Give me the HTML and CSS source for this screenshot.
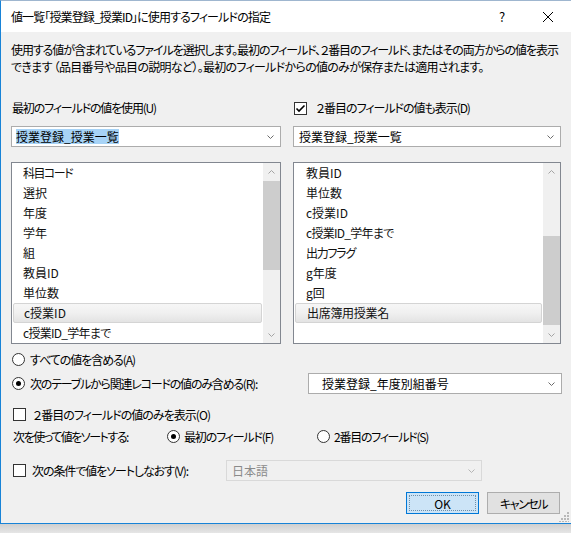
FILE: index.html
```html
<!DOCTYPE html>
<html lang="ja">
<head>
<meta charset="utf-8">
<link rel="stylesheet" href="styles.css">
</head>
<body>
<div class="window">
  <div class="titlebar">
    <span class="title">値一覧「授業登録_授業ID」に使用するフィールドの指定</span>
    <span class="help">?</span>
    <span class="close"><svg width="10" height="10" viewBox="0 0 10 10"><path d="M0 0 L10 10 M10 0 L0 10" stroke="#000" stroke-width="1" fill="none"/></svg></span>
  </div>
  <div class="content">
    <div class="desc">
      <div class="desc1">使用する値が含まれているファイルを選択します。最初のフィールド、２番目のフィールド、またはその両方からの値を表示</div>
      <div class="desc2">できます （品目番号や品目の説明など）。最初のフィールドからの値のみが保存または適用されます。</div>
    </div>
    <div class="columns">
      <div class="col">
        <div class="label label-u">最初のフィールドの値を使用(U)</div>
        <div class="combo">
          <span class="sel">授業登録_授業一覧</span>
          <svg class="chev" width="7" height="4" viewBox="0 0 7 4"><path d="M0.5 0.5 L3.5 3.5 L6.5 0.5" stroke="#6b6b6b" fill="none"/></svg>
        </div>
        <div class="list">
          <div class="items">
            <div class="item kana">科目コード</div>
            <div class="item">選択</div>
            <div class="item">年度</div>
            <div class="item">学年</div>
            <div class="item">組</div>
            <div class="item">教員ID</div>
            <div class="item">単位数</div>
            <div class="item selected">c授業ID</div>
            <div class="item kana2">c授業ID_学年まで</div>
          </div>
          <div class="scrollbar">
            <div class="arrow"><svg width="7" height="4" viewBox="0 0 7 4"><path d="M0.5 3.5 L3.5 0.5 L6.5 3.5" stroke="#a3a3a3" fill="none"/></svg></div>
            <div class="track">
              <div class="thumb thumb-left"></div>
            </div>
            <div class="arrow"><svg width="7" height="4" viewBox="0 0 7 4"><path d="M0.5 0.5 L3.5 3.5 L6.5 0.5" stroke="#a3a3a3" fill="none"/></svg></div>
          </div>
        </div>
      </div>
      <div class="col">
        <div class="label check-label"><span class="checkbox checked"><svg width="11" height="11" viewBox="0 0 11 11"><path d="M1.5 5.5 L4 8 L9.5 2.5" stroke="#000" stroke-width="1.6" fill="none"/></svg></span><span class="label-d">２番目のフィールドの値も表示(D)</span></div>
        <div class="combo">
          <span class="plain">授業登録_授業一覧</span>
          <svg class="chev" width="7" height="4" viewBox="0 0 7 4"><path d="M0.5 0.5 L3.5 3.5 L6.5 0.5" stroke="#6b6b6b" fill="none"/></svg>
        </div>
        <div class="list list-right">
          <div class="items">
            <div class="item">教員ID</div>
            <div class="item">単位数</div>
            <div class="item">c授業ID</div>
            <div class="item kana2">c授業ID_学年まで</div>
            <div class="item kana3">出力フラグ</div>
            <div class="item">g年度</div>
            <div class="item">g回</div>
            <div class="item selected kana4">出席簿用授業名</div>
          </div>
          <div class="scrollbar">
            <div class="arrow"><svg width="7" height="4" viewBox="0 0 7 4"><path d="M0.5 3.5 L3.5 0.5 L6.5 3.5" stroke="#a3a3a3" fill="none"/></svg></div>
            <div class="track">
              <div class="thumb thumb-right"></div>
            </div>
            <div class="arrow"><svg width="7" height="4" viewBox="0 0 7 4"><path d="M0.5 0.5 L3.5 3.5 L6.5 0.5" stroke="#a3a3a3" fill="none"/></svg></div>
          </div>
        </div>
      </div>
    </div>

    <div class="row row-a"><span class="radio"></span><span class="t-a">すべての値を含める(A)</span></div>
    <div class="row row-r">
      <span class="radio on"></span><span class="t-r">次のテーブルから関連レコードの値のみ含める(R):</span>
      <div class="combo combo-rel">
        <span class="plain">授業登録_年度別組番号</span>
        <svg class="chev" width="7" height="4" viewBox="0 0 7 4"><path d="M0.5 0.5 L3.5 3.5 L6.5 0.5" stroke="#6b6b6b" fill="none"/></svg>
      </div>
    </div>
    <div class="row row-o"><span class="checkbox"></span><span class="t-o">２番目のフィールドの値のみを表示(O)</span></div>
    <div class="row row-sort">
      <span class="sort-label">次を使って値をソートする:</span>
      <span class="opt"><span class="radio on"></span><span class="t-f">最初のフィールド(F)</span></span>
      <span class="opt"><span class="radio"></span><span class="t-s">2番目のフィールド(S)</span></span>
    </div>
    <div class="row row-v">
      <span class="checkbox"></span><span class="v-label">次の条件で値をソートしなおす(V):</span>
      <div class="combo combo-lang">
        <span class="plain">日本語</span>
        <svg class="chev" width="7" height="4" viewBox="0 0 7 4"><path d="M0.5 0.5 L3.5 3.5 L6.5 0.5" stroke="#b5b5b5" fill="none"/></svg>
      </div>
    </div>
    <div class="buttons">
      <button class="btn btn-ok"><span class="focus">OK</span></button>
      <button class="btn btn-cancel">キャンセル</button>
    </div>
    <div class="grip"><svg width="10" height="10" viewBox="0 0 10 10"><g fill="#b8b8b8"><rect x="8" y="0" width="2" height="2"/><rect x="5" y="3" width="2" height="2"/><rect x="8" y="3" width="2" height="2"/><rect x="2" y="6" width="2" height="2"/><rect x="5" y="6" width="2" height="2"/><rect x="8" y="6" width="2" height="2"/><rect x="0" y="9" width="2" height="1"/><rect x="3" y="9" width="2" height="1"/><rect x="6" y="9" width="2" height="1"/><rect x="9" y="9" width="1" height="1"/></g></svg></div>
  </div>
</div>
<div class="shadow"></div>
</body>
</html>
```

FILE: styles.css
```css
* { box-sizing: border-box; }
html, body { margin: 0; padding: 0; }
body {
  width: 571px;
  height: 533px;
  overflow: hidden;
  background: #e8e8e8;
  font-family: "Noto Sans CJK JP", "Noto Sans", sans-serif;
  font-size: 12px;
  font-feature-settings: "palt";
  color: #000;
}
.window {
  width: 572px;
  height: 524px;
  border-left: 1px solid #1883d7;
  border-top: 1px solid #9fb6cf;
  border-bottom: 1px solid #1883d7;
  background: #f0f0f0;
  display: flex;
  flex-direction: column;
  overflow: hidden;
}
.titlebar {
  height: 31px;
  background: #fff;
  display: flex;
  align-items: center;
  padding-left: 10px;
  flex-shrink: 0;
}
.title { font-size: 12px; flex: 1; line-height: 16px; letter-spacing: -0.88px; }
.help { width: 46px; text-align: center; font-size: 13px; }
.close { width: 46px; display: flex; justify-content: center; margin-right: 1px; }

.content {
  flex: 1;
  padding: 0 10px;
  position: relative;
  display: flex;
  flex-direction: column;
}
.desc { margin-top: 9px; line-height: 17px; white-space: nowrap; }
.desc1 { letter-spacing: -1.07px; }
.desc2 { letter-spacing: -0.7px; }

.columns {
  display: grid;
  grid-template-columns: 270px 268px;
  column-gap: 12px;
  margin-top: 25px;
}
.label { height: 16px; line-height: 16px; padding-left: 1px; }
.label-u { letter-spacing: -1.16px; }
.label-d { letter-spacing: -1.04px; }
.check-label { display: flex; align-items: center; gap: 9px; padding-left: 1px; }

.combo {
  margin-top: 10px;
  height: 21px;
  border: 1px solid #acacac;
  background: #fff;
  display: flex;
  align-items: center;
  padding-left: 4px;
  padding-right: 6px;
}
.combo .chev { margin-left: auto; }
.sel { background: #a7d3f6; line-height: 15px; }
.plain { padding-left: 1px; }

.list {
  margin-top: 15px;
  height: 182px;
  border: 1px solid #828790;
  background: #fff;
  display: flex;
}
.items { flex: 1; padding: 0 1px; }
.item {
  height: 20px;
  line-height: 20px;
  padding-left: 10px;
  color: #111;
  white-space: nowrap;
}
.item.kana { letter-spacing: -1.54px; }
.item.kana2 { letter-spacing: -0.72px; }
.item.kana3 { letter-spacing: -1.26px; }
.item.kana4 { letter-spacing: -0.3px; }
.list-right .item { padding-left: 11px; }
.item.selected {
  border: 1px solid #d4d4d4;
  border-radius: 2px;
  line-height: 18px;
  background: linear-gradient(#f6f6f6 0%, #f0f0f0 50%, #e3e3e3 100%);
}
.scrollbar {
  width: 17px;
  background: #f0f0f0;
  display: flex;
  flex-direction: column;
}
.arrow {
  height: 17px;
  display: flex;
  align-items: center;
  justify-content: center;
}
.track { flex: 1; position: relative; }
.thumb { position: absolute; left: 0; right: 0; background: #cdcdcd; }
.thumb-left { top: 1px; height: 89px; }
.thumb-right { top: 56px; height: 89px; }

.row { display: flex; align-items: center; padding-left: 2px; white-space: nowrap; }
.row-a { height: 20px; margin-top: 5px; gap: 5px; padding-left: 1px; }
.row-r { height: 21px; margin-top: 4px; gap: 5px; padding-left: 1px; }
.row-o { height: 20px; margin-top: 10px; gap: 7px; }
.row-sort { height: 20px; margin-top: 2px; }
.row-v { height: 21px; margin-top: 14px; gap: 6px; }
.t-a { letter-spacing: -1.05px; }
.t-r { letter-spacing: -1.21px; }
.t-o { letter-spacing: -0.96px; }
.t-f { letter-spacing: -1.17px; }
.t-s { letter-spacing: -1.26px; }

.radio {
  width: 13px;
  height: 13px;
  border: 1px solid #333;
  border-radius: 50%;
  background: #fff;
  display: inline-flex;
  align-items: center;
  justify-content: center;
  flex-shrink: 0;
}
.radio.on::after {
  content: "";
  width: 5px;
  height: 5px;
  border-radius: 50%;
  background: #000;
}
.checkbox {
  width: 13px;
  height: 13px;
  border: 1px solid #333;
  background: #fff;
  display: inline-flex;
  align-items: center;
  justify-content: center;
  flex-shrink: 0;
}
.combo-rel { margin: 0 0 0 auto; width: 254px; height: 21px; padding-left: 12px; }
.combo-lang {
  margin: 0;
  width: 256px;
  height: 21px;
  border-color: #d9d9d9;
  background: #f0f0f0;
  color: #8a8a8a;
}
.v-label { width: 188px; letter-spacing: -1.08px; }
.sort-label { width: 154px; letter-spacing: -1.47px; }
.opt { display: flex; align-items: center; gap: 4px; width: 150px; }

.buttons {
  margin-top: 11px;
  display: flex;
  justify-content: flex-end;
  gap: 8px;
  padding-right: 2px;
}
.btn {
  width: 73px;
  height: 22px;
  font-family: inherit;
  font-size: 12px;
  font-feature-settings: "palt";
  border: 1px solid #adadad;
  background: #e1e1e1;
  color: #000;
  padding: 0;
}
.btn-cancel { letter-spacing: -1.48px; }
.btn-ok {
  border-color: #0078d7;
  background: #cce4f7;
  padding: 2px;
}
.btn-ok .focus {
  display: flex;
  align-items: center;
  justify-content: center;
  height: 100%;
  border: 1px dotted #6f8fa8;
}
.grip { position: absolute; right: 3px; bottom: 1px; line-height: 0; }

.shadow {
  height: 9px;
  background: linear-gradient(#cfcfcf, #e6e6e6);
}
```
